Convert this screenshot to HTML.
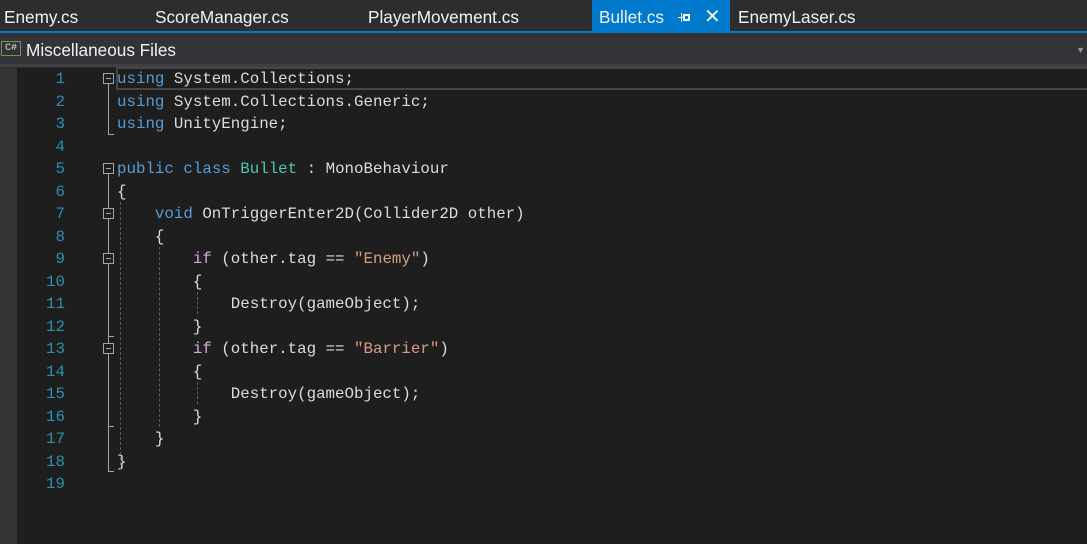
<!DOCTYPE html>
<html><head><meta charset="utf-8"><style>
*{margin:0;padding:0;box-sizing:border-box}
body{width:1087px;height:544px;background:#1e1e1e;overflow:hidden;position:relative;font-family:"Liberation Sans",sans-serif}
.tabs{position:absolute;left:0;top:0;width:1087px;height:31px;background:#2d2d30}
.tab{position:absolute;top:0;height:31px;line-height:35px;font-size:17.2px;color:#f1f1f1}
.blue{position:absolute;left:0;top:31px;width:1087px;height:2px;background:#007acc}
.nav{position:absolute;left:0;top:33px;width:1087px;height:31px;background:#333337;color:#f1f1f1;font-size:17.2px}
.sep{position:absolute;left:0;top:64px;width:1087px;height:4px;background:#3f3f46;border-bottom:1px solid #2d2d30}
.margin{position:absolute;left:0;top:68px;width:17px;height:476px;background:#333333}
.ln{position:absolute;left:20px;width:45px;text-align:right;color:#2b91af;font-family:"Liberation Mono",monospace;font-size:15.8px;line-height:22.5px}
.code{position:absolute;left:117px;white-space:pre;color:#dcdcdc;font-family:"Liberation Mono",monospace;font-size:15.8px;line-height:22.5px}
.k{color:#569cd6}.t{color:#4ec9b0}.s{color:#d69d85}.c{color:#d8a0df}
.fb{position:absolute;left:103px;width:11px;height:11px;border:1px solid #a5a5a5;background:#1e1e1e}
.fb:after{content:"";position:absolute;left:2px;top:4px;width:5px;height:1px;background:#a5a5a5}
.vl{position:absolute;left:108px;width:1px;background:#a5a5a5}
.tk{position:absolute;left:108px;width:6px;height:1px;background:#a5a5a5}
.dg{position:absolute;width:0;border-left:1px dashed #5a5a5a}
</style></head><body>
<div class="tabs">
<div class="tab" style="left:4px">Enemy.cs</div>
<div class="tab" style="left:155px">ScoreManager.cs</div>
<div class="tab" style="left:368px">PlayerMovement.cs</div>
<div class="tab" style="left:592px;width:138px;background:#007acc;padding-left:7px">Bullet.cs
<div style="position:absolute;left:86px;top:17px;width:6px;height:1px;background:#fff"></div>
<div style="position:absolute;left:89px;top:13px;width:1px;height:9px;background:#fff"></div>
<div style="position:absolute;left:91px;top:14px;width:7px;height:7px;border:2px solid #fff"></div>
<span style="position:absolute;left:112px;font-size:20px;line-height:34px">✕</span></div>
<div class="tab" style="left:738px">EnemyLaser.cs</div>
</div>
<div class="blue"></div>
<div class="nav"><div style="position:absolute;left:1px;top:8px;width:20px;height:15px;border:1px solid #6a9955;font-size:10px;line-height:13px;text-align:center;color:#ddd;font-family:'Liberation Mono',monospace">C#</div><div style="position:absolute;left:26px;top:7px">Miscellaneous Files</div><div style="position:absolute;right:2px;top:12px;color:#999;font-size:9px">▼</div></div>
<div class="sep"></div>
<div class="margin"></div>
<div style="position:absolute;left:116px;top:67px;width:971px;height:23px;border:2px solid #464646;border-right:none"></div>

<div class="ln" style="top:68px">1<br>2<br>3<br>4<br>5<br>6<br>7<br>8<br>9<br>10<br>11<br>12<br>13<br>14<br>15<br>16<br>17<br>18<br>19</div>
<div class="code" style="top:68px"><span class="k">using</span> System.Collections;
<span class="k">using</span> System.Collections.Generic;
<span class="k">using</span> UnityEngine;

<span class="k">public</span> <span class="k">class</span> <span class="t">Bullet</span> : MonoBehaviour
{
    <span class="k">void</span> OnTriggerEnter2D(Collider2D other)
    {
        <span class="c">if</span> (other.tag == <span class="s">"Enemy"</span>)
        {
            Destroy(gameObject);
        }
        <span class="c">if</span> (other.tag == <span class="s">"Barrier"</span>)
        {
            Destroy(gameObject);
        }
    }
}
</div>
<div class="vl" style="top:84px;height:50px"></div><div class="tk" style="top:134px"></div>
<div class="vl" style="top:174px;height:297px"></div><div class="tk" style="top:471px"></div>
<div class="tk" style="top:426px"></div><div class="tk" style="top:336px"></div>
<div class="fb" style="top:73px"></div>
<div class="fb" style="top:163px"></div>
<div class="fb" style="top:208px"></div>
<div class="fb" style="top:253px"></div>
<div class="fb" style="top:343px"></div>
<div class="dg" style="left:120px;top:202px;height:268px"></div>
<div class="dg" style="left:159px;top:247px;height:180px"></div>
<div class="dg" style="left:197px;top:292px;height:22px"></div>
<div class="dg" style="left:197px;top:382px;height:22px"></div>
</body></html>
